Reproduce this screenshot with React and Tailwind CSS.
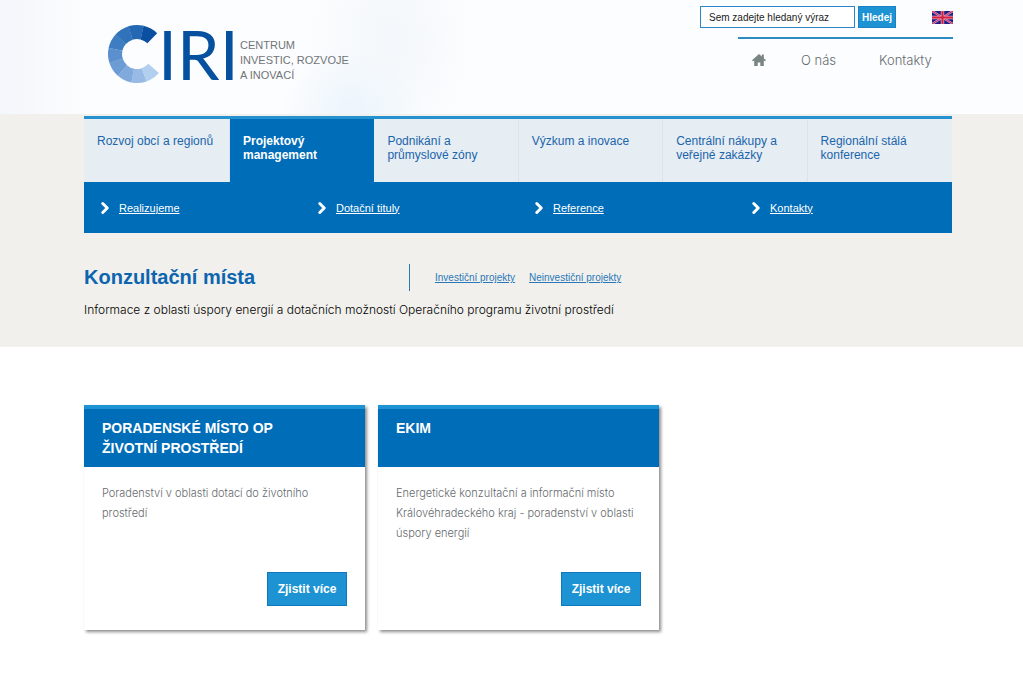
import { ChevronRight } from "lucide-react";

const tabs = [
  { label: "Rozvoj obcí a regionů" },
  { label: "Projektový management", active: true },
  { label: "Podnikání a průmyslové zóny" },
  { label: "Výzkum a inovace" },
  { label: "Centrální nákupy a veřejné zakázky" },
  { label: "Regionální stálá konference" },
];

const subLinks = ["Realizujeme", "Dotační tituly", "Reference", "Kontakty"];

const cards = [
  {
    title: "Poradenské místo OP Životní prostředí",
    text: "Poradenství v oblasti dotací do životního prostředí",
  },
  {
    title: "EKIM",
    text: "Energetické konzultační a informační místo Královéhradeckého kraj - poradenství v oblasti úspory energií",
  },
];

// ring segments of the logo, from dark (top right) to light (bottom right)
const ringColors = [
  "#0a4fa0",
  "#2468b4",
  "#3173bb",
  "#3f7dc2",
  "#5b8fcd",
  "#6d9bd4",
  "#80aadc",
  "#98bbe5",
  "#b3cff0",
];

function ringSegment(i) {
  const point = (r, deg) => {
    const a = (deg * Math.PI) / 180;
    return `${(30 + r * Math.cos(a)).toFixed(2)} ${(30 + r * Math.sin(a)).toFixed(2)}`;
  };
  const step = 273 / 9;
  const from = -46 - i * step;
  const to = from - step - (i < 8 ? 0.6 : 0);
  return `M${point(29, from)} A29 29 0 0 0 ${point(29, to)} L${point(15, to)} A15 15 0 0 1 ${point(15, from)} Z`;
}

function Logo() {
  return (
    <a href="#" className="flex text-[#717478]">
      <svg
        width="128"
        height="60"
        viewBox="0 0 128 60"
        className="overflow-visible"
        role="img"
        aria-label="CIRI"
      >
        {ringColors.map((color, i) => (
          <path key={color} d={ringSegment(i)} fill={color} />
        ))}
        <text x="51" y="56" fill="#05509f" fontFamily="Lato, sans-serif" fontSize="68">
          IRI
        </text>
      </svg>
      <span className="pt-[14px] pl-[5px] font-['Liberation_Sans',sans-serif] text-[11px] leading-[15px] uppercase">
        Centrum
        <br />
        investic, rozvoje
        <br />a inovací
      </span>
    </a>
  );
}

function Flag() {
  return (
    <svg width="21" height="13" viewBox="0 0 21 13" role="img" aria-label="English">
      <rect width="21" height="13" fill="#1d1f86" />
      <path d="M0 0L21 13M21 0L0 13" stroke="#d79cc4" strokeWidth="2.2" />
      <path d="M0 0L21 13M21 0L0 13" stroke="#c8285a" strokeWidth="1" />
      <path d="M10.5 0V13M0 6.5H21" stroke="#e6a8c8" strokeWidth="3.4" />
      <path d="M10.5 0V13M0 6.5H21" stroke="#d0213f" strokeWidth="2" />
    </svg>
  );
}

function HomeIcon() {
  return (
    <svg width="14" height="12" viewBox="0 0 14 12" fill="#788581" role="img" aria-label="Úvod">
      <path d="M7 0L0 6.2L1 7.2L2.2 6.4V12H5.7V8.4H8.3V12H11.8V6.4L13 7.2L14 6.2L11.8 4.2V0.6H9.8V2.4Z" />
    </svg>
  );
}

export default function App() {
  return (
    <div className="min-h-screen bg-white font-[Inter,sans-serif] text-[#222]">
      {/* HEADER */}
      <header className="h-[114px] bg-[#fcfdfe] bg-[radial-gradient(ellipse_70px_60px_at_350px_108px,#ecf5fc,transparent),radial-gradient(ellipse_90px_130px_at_390px_40px,#f3f7fb,transparent),linear-gradient(to_right,#f3f6fb,#fcfdfe_90px,#fcfdfe)]">
        <div className="flex justify-between pr-[70px] pl-[107px]">
          <div className="pt-6">
            <Logo />
          </div>

          <div className="flex flex-col items-end">
            <div className="flex items-center pt-[6px]">
              <form
                className="flex gap-[3px] font-['Liberation_Sans',sans-serif] text-[10px]"
                onSubmit={(e) => e.preventDefault()}
              >
                <input
                  type="text"
                  aria-label="Vyhledávání"
                  defaultValue="Sem zadejte hledaný výraz"
                  className="h-[22px] w-[155px] border border-[#2a86c8] bg-white px-2 text-[#222]"
                />
                <button className="h-[22px] w-[38px] border border-[#1b80c4] bg-[#1d93d3] font-bold text-white">
                  Hledej
                </button>
              </form>
              <a href="#" className="ml-9">
                <Flag />
              </a>
            </div>
            <nav className="mt-[9px] flex w-[215px] items-center border-t-2 border-[#2d8cc4] pt-3 pl-[14px] text-[13px] leading-[18px] font-light text-[#666b6e]">
              <a href="#">
                <HomeIcon />
              </a>
              <a href="#" className="ml-[35px]">O nás</a>
              <a href="#" className="ml-[43px]">Kontakty</a>
            </nav>
          </div>
        </div>
      </header>

      {/* NAVIGATION + PAGE TITLE */}
      <section className="bg-[#f1f0ec] pt-[2px] pr-[71px] pb-7 pl-[84px]">
        <nav className="border-t-3 border-[#2691cf] font-['Liberation_Sans',sans-serif]">
          <ul className="grid grid-cols-[146px_repeat(5,1fr)] bg-[#e6edf3] text-[12px] leading-[14px] text-[#1a65ab]">
            {tabs.map((tab) => (
              <li
                key={tab.label}
                className={
                  tab.active
                    ? "bg-[#006db8] font-bold text-white"
                    : "border-r border-[#dde3e6] last:border-r-0"
                }
              >
                <a href="#" className="block h-[63px] px-[13px] pt-[15px]">
                  {tab.label}
                </a>
              </li>
            ))}
          </ul>
          <ul className="grid h-[51px] grid-cols-4 items-center bg-[#006db8] text-[11px] leading-[18px] text-white">
            {subLinks.map((label) => (
              <li key={label} className="flex items-center gap-[5px] pl-3">
                <ChevronRight size={18} strokeWidth={4} />
                <a href="#" className="underline">{label}</a>
              </li>
            ))}
          </ul>
        </nav>

        <div className="mt-[31px] flex items-center font-['Liberation_Sans',sans-serif]">
          <h1 className="w-[325px] text-[20px] leading-[27px] font-bold text-[#0d65b0]">
            Konzultační místa
          </h1>
          <div className="flex h-[27px] items-center gap-[14px] border-l border-[#2a78b4] pl-[25px] text-[10px] text-[#2a78b8]">
            <a href="#" className="underline">Investiční projekty</a>
            <a href="#" className="underline">Neinvestiční projekty</a>
          </div>
        </div>
        <p className="mt-[10px] text-[12px] leading-[18px] font-light text-black">
          Informace z oblasti úspory energií a dotačních možností Operačního programu životní prostředí
        </p>
      </section>

      {/* CARDS */}
      <main className="flex flex-wrap gap-[13px] pt-[58px] pr-[71px] pb-12 pl-[84px]">
        {cards.map((card) => (
          <article
            key={card.title}
            className="flex min-h-[225px] w-[281px] flex-col bg-white shadow-[2px_2px_3px_rgba(0,0,0,0.45)]"
          >
            <h2 className="h-[62px] border-t-4 border-[#1d93d3] bg-[#006db8] pt-[9px] pr-[60px] pl-[18px] font-['Liberation_Sans',sans-serif] text-[14px] leading-5 font-bold text-white uppercase">
              {card.title}
            </h2>
            <p className="px-[18px] pt-4 text-[11px] leading-5 font-light text-[#666a6e]">{card.text}</p>
            <button className="mt-auto mr-[18px] mb-6 h-[34px] w-20 self-end border border-[#1079bd] bg-[#1d93d3] font-['Liberation_Sans',sans-serif] text-[12px] font-bold text-white">
              Zjistit více
            </button>
          </article>
        ))}
      </main>
    </div>
  );
}
